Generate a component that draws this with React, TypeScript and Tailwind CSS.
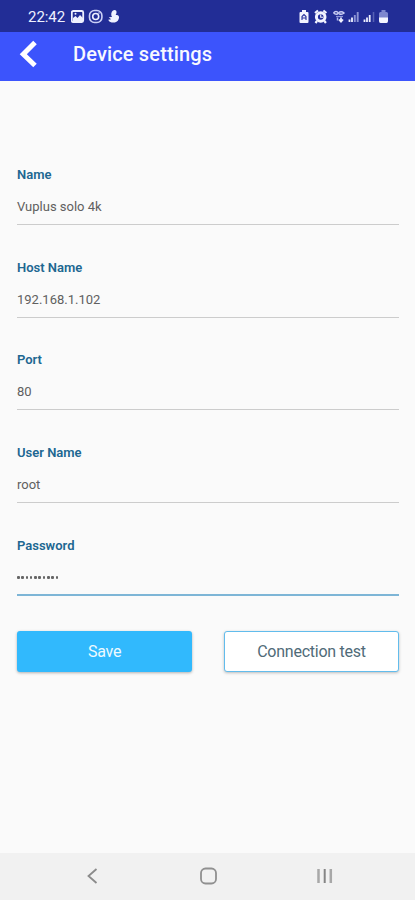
import React from "react";

type FieldProps = { label: string; value: string; active?: boolean };

function Field({ label, value, active }: FieldProps) {
  return (
    <div className="h-[92.7px]">
      <div className="h-[18px] text-[13px] leading-[18px] font-semibold text-[#206791]">{label}</div>
      {active ? (
        <div className="mt-[14px] flex h-[18px] items-center gap-[1.8px]" aria-label="Password">
          {Array.from(value).map((_, i) => (
            <span key={i} className="h-[3px] w-[2.5px] rounded-[1px] bg-[#666]" />
          ))}
        </div>
      ) : (
        <div className="mt-[14px] h-[18px] text-[13px] leading-[18px] text-[#606060]">{value}</div>
      )}
      <div className={active ? "mt-[7px] h-[2px] bg-[#7db5d6]" : "mt-[8px] h-px bg-[#cccccc]"} />
    </div>
  );
}

function StatusIcons() {
  return (
    <svg width="92" height="16" viewBox="298 9 92 16" fill="none">
      <path d="M302 10h4v2h1.500q1 0 1 1v9q0 1-1 1h-7q-1 0-1-1v-9q0-1 1-1h1.500z" fill="#f3f4ff" />
      <path d="M302 20v-3.500l2-2 2 2V20M302 18h4" stroke="#26309b" strokeWidth="1.1" />
      <circle cx="320.700" cy="17" r="4.300" fill="#26309b" stroke="#f3f4ff" strokeWidth="3" />
      <path d="M315 13l3-2.500M326.400 13l-3-2.500M317 21l-1.500 2M324.400 21l1.500 2" stroke="#f3f4ff" strokeWidth="2.200" />
      <path d="M320.700 14.500v2.700h2.300" stroke="#f3f4ff" strokeWidth="1.100" />
      <path d="M333.500 13q2.500-3 5 0q-2 2.500-5 0M339 12.200q3-1 5 .8-2 2-5 .8" stroke="#c8ccf3" strokeWidth="1.500" />
      <path d="M336 16.500h7" stroke="#8f96da" strokeWidth="1.200" />
      <path d="M337.500 20.500v-3" stroke="#aeb4eb" strokeWidth="1.500" />
      <path d="M341 17.500v4m-2-2l2 2.300 2-2.300" stroke="#f0f1ff" strokeWidth="1.700" />
      <path d="M349.500 22v-2.500M352 22v-4.500" stroke="#eef0ff" strokeWidth="1.800" />
      <path d="M354.800 22v-7M357.700 22V12" stroke="#8c94d5" strokeWidth="1.900" />
      <path d="M364.500 22v-2.500M367 22v-4.500M369.700 22v-7" stroke="#eef0ff" strokeWidth="1.800" />
      <path d="M373.500 22V12" stroke="#5660b4" strokeWidth="1.600" />
      <path d="M381.500 10h4v2h1q1.500 0 1.500 1.500V18h-9v-4.500q0-1.500 1.500-1.500h1z" fill="#7e87cf" />
      <path d="M379 17.500h9V21q0 2-1.500 2h-6q-1.500 0-1.500-2z" fill="#f4f5ff" />
    </svg>
  );
}

export default function App() {
  return (
    <main className="flex h-[900px] w-full flex-col bg-[#fafafa] font-[Roboto,sans-serif]">
      <header>
        <div className="flex h-8 items-center justify-between bg-[#222d96] pr-[25px] pl-[28px]">
          <div className="flex items-center pt-[2px]">
            <span className="w-[38px] text-[15px] leading-4 tracking-[-0.05px] text-[#eef0ff]">22:42</span>
            <svg className="ml-[5px]" width="50" height="16" viewBox="71 9 50 16" fill="none">
              <rect x="71.800" y="11" width="11.400" height="11" rx="1.500" stroke="#eef0ff" strokeWidth="1.800" />
              <path d="M73 21v-3l2.500-2 2 2 2.500-3 3 3v3z" fill="#eef0ff" />
              <circle cx="75.500" cy="13.800" r="1" fill="#eef0ff" />
              <rect x="89.500" y="10.500" width="12.400" height="12" rx="5" stroke="#cdd1f7" strokeWidth="1.600" />
              <circle cx="95.700" cy="16.500" r="3" stroke="#eef0ff" strokeWidth="1.600" />
              <circle cx="99" cy="13" r=".7" fill="#eef0ff" />
              <path d="M113 10.500c2-1.500 4 0 3.500 2.500l-.8 2c3-.5 4 1.500 3 4-1 3-4 4-7 3.500-2-.4-3-1.500-3.500-2.700l3-.5-2.500-2 3.300-.2c-1.300-2-.9-5.500 1-6.600z" fill="#f0f2ff" />
            </svg>
          </div>
          <div className="pt-px"><StatusIcons /></div>
        </div>
        <div className="flex h-[49px] items-center bg-[#3c54fc] pb-[5px] pl-[19px]">
          <svg width="20" height="30" viewBox="0 0 20 30" fill="none">
            <path d="M16 3.500L4.300 15.200 16 26.500" stroke="white" strokeWidth="5" />
          </svg>
          <h1 className="ml-[34px] text-[20px] leading-6 font-medium tracking-[0.15px] text-[#f7f8ff]">Device settings</h1>
        </div>
      </header>

      <section className="flex-1 pt-[85px] pr-4 pl-[17px]">
        <Field label="Name" value="Vuplus solo 4k" />
        <Field label="Host Name" value="192.168.1.102" />
        <Field label="Port" value="80" />
        <Field label="User Name" value="root" />
        <Field label="Password" value="••••••••••" active />
        <div className="mt-[1.500px] flex justify-between">
          <button className="h-[41px] w-[175px] rounded-[3px] bg-[#31b9fd] pt-[2px] text-[16px] tracking-[-0.25px] text-[#eefaff] shadow-[0_1px_3px_rgba(0,0,0,0.3)]">Save</button>
          <button className="h-[41px] w-[175px] rounded-[3px] border-[1.500px] border-[#62bcec] bg-white pt-[2px] text-[16px] tracking-[-0.25px] text-[#506b78] shadow-[0_1px_3px_rgba(0,0,0,0.25)]">Connection test</button>
        </div>
      </section>

      <nav className="h-[47px] bg-[#f1f1f1]">
        <svg width="415" height="47" viewBox="0 853 415 47" fill="none">
          <path d="M96.500 869l-8 7 8 7" stroke="#8b8b8b" strokeWidth="1.800" />
          <rect x="201" y="868.500" width="15" height="15" rx="4.500" stroke="#909090" strokeWidth="1.800" />
          <path d="M318.500 869v14M330.800 869v14" stroke="#a8a8a8" strokeWidth="2.500" />
          <path d="M324.700 869v14" stroke="#858585" strokeWidth="2" />
        </svg>
      </nav>
    </main>
  );
}
